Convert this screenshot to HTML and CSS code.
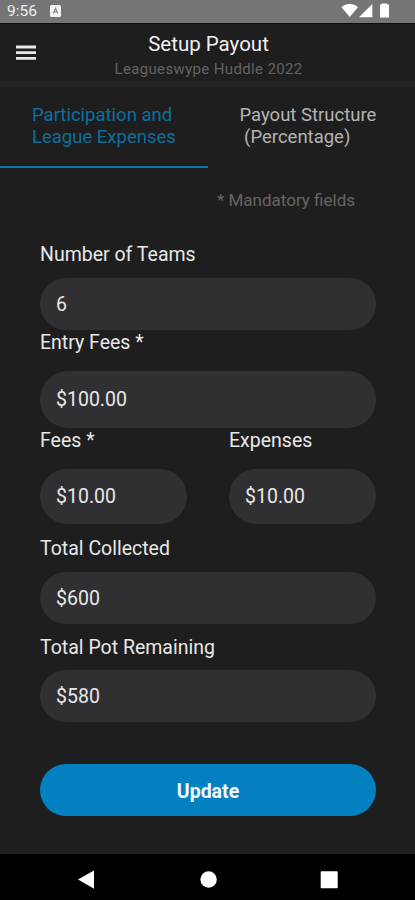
FILE: index.html
```html
<!DOCTYPE html>
<html lang="en">
<head>
<meta charset="utf-8">
<title>Setup Payout</title>
<link rel="stylesheet" href="styles.css">
</head>
<body>
<div class="status">
  <span class="time">9:56</span>
  <svg class="app-badge" width="12" height="12" viewBox="0 0 12 12"><rect width="11" height="12" rx="1.5" fill="#f2f2f2"/><path d="M3.2 8.5 5.5 3.2 7.8 8.5M4 6.8H7" fill="none" stroke="#8a8a8c" stroke-width="1.2"/></svg>
  <svg class="signals" width="50" height="16" viewBox="0 0 50 16"><path d="M.5 4.2C5-.2 12.500-.2 17 4.200L8.700 14Z" fill="#fff"/><path d="M18 14.200 31.300 1V14.200Z" fill="#fff"/><path d="M40.500 1.500V.5H46V1.500H48V14.500H39V1.500Z" fill="#fff"/></svg>
</div>
<header class="header">
  <svg class="menu" width="20" height="16" viewBox="0 0 20 16"><path d="M0 2H20M0 7.700H20M0 13.300H20" stroke="#ebe9e7" stroke-width="2.800"/></svg>
  <div class="heading">
    <h1 class="title">Setup Payout</h1>
    <p class="subtitle">Leagueswype Huddle 2022</p>
  </div>
</header>
<nav class="tabs">
  <div class="tab active"><span>Participation and<br>League Expenses</span></div>
  <div class="tab"><span>Payout Structure<br>&nbsp;(Percentage)</span></div>
</nav>
<main class="form">
  <p class="note">* Mandatory fields</p>
  <label class="label teams">Number of Teams</label>
  <div class="field">6</div>
  <label class="label entry">Entry Fees *</label>
  <div class="field tall">$100.00</div>
  <div class="row">
    <div class="col"><label class="label fees">Fees *</label><div class="field mid">$10.00</div></div>
    <div class="col"><label class="label fees">Expenses</label><div class="field mid">$10.00</div></div>
  </div>
  <label class="label collected">Total Collected</label>
  <div class="field">$600</div>
  <label class="label pot">Total Pot Remaining</label>
  <div class="field">$580</div>
  <button class="update">Update</button>
</main>
<footer class="navbar">
  <svg width="415" height="46" viewBox="0 0 415 46"><path d="M78 25.500 94 16.500V34.700Z" fill="#fff"/><circle cx="208.600" cy="25.500" r="8.200" fill="#fff"/><rect x="320.700" y="17.200" width="17" height="17" rx=".8" fill="#fff"/></svg>
</footer>
</body>
</html>
```
FILE: styles.css
```css
* { box-sizing: border-box; }
body {
  margin: 0;
  width: 415px;
  height: 900px;
  overflow: hidden;
  background: #1e1e1e;
  color: #e8e8e8;
  font-family: Roboto, "Liberation Sans", sans-serif;
  font-size: 19.5px;
  display: flex;
  flex-direction: column;
}
.status {
  height: 23px;
  background: #757577;
  display: flex;
  align-items: flex-start;
  flex: none;
}
.time { font-size: 15.500px; line-height: 20px; margin: 1px 0 0 7px; width: 43px; color: #f0f0f0; }
.app-badge { margin-top: 5px; }
.signals { margin: 3px 0 0 279px; }
.header {
  height: 64px;
  flex: none;
  display: flex;
  border-top: 1px solid #0c0c0c;
  border-bottom: 6px solid #252525;
}
.menu { margin: 21px 0 0 16px; flex: none; }
.heading { width: 345px; text-align: center; }
.title { margin: 7px 0 0; font-size: 20.500px; font-weight: 400; line-height: 26px; color: #f0f0f0; }
.subtitle { margin: 2px 0 0; font-size: 15px; line-height: 20px; color: #636363; letter-spacing: .35px; }
.tabs { display: flex; height: 81px; flex: none; }
.tab {
  width: 208px;
  padding: 18px 0 0 32px;
  font-size: 18.500px;
  line-height: 21.700px;
  color: #b4b4b4;
}
.tab.active { color: #0b70a0; border-bottom: 2.500px solid #0b76a9; }
.form { padding: 0 39px 0 40px; height: 686px; flex: none; }
.note { margin: 0; padding: 21px 21px 0 0; height: 75px; text-align: right; font-size: 17px; line-height: 22px; color: #656565; }
.label { display: block; line-height: 24px; }
.teams { height: 35px; }
.entry { height: 41px; padding-top: 1px; }
.fees { height: 41px; padding-top: 1px; }
.collected { height: 48px; padding-top: 13px; }
.pot { height: 46px; padding-top: 12px; }
.field {
  height: 52px;
  border-radius: 28px;
  background: #303032;
  padding-left: 16px;
  display: flex;
  align-items: center;
}
.tall { height: 57px; }
.mid { height: 55px; }
.row { display: flex; gap: 42px; }
.col { flex: 1; }
.update {
  display: block;
  width: 100%;
  height: 52px;
  margin-top: 42px;
  padding: 2px 0 0;
  border: 0;
  border-radius: 26px;
  background: #0380bf;
  color: #f6f9fb;
  font: bold 19.500px Roboto, "Liberation Sans", sans-serif;
}
.navbar { height: 46px; background: #000; flex: none; }
.navbar svg { display: block; }
```
